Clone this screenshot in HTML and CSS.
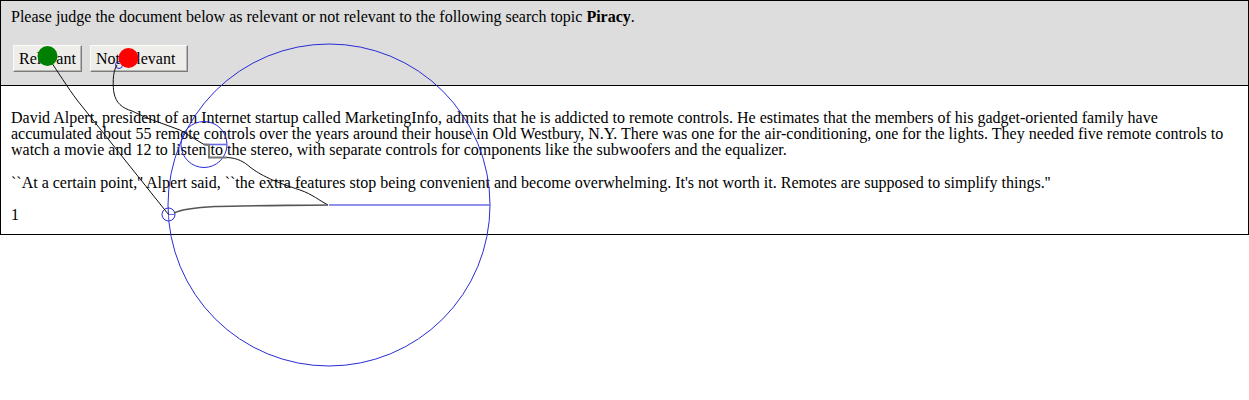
FILE: index.html
```html
<!DOCTYPE html>
<html>
<head>
<meta charset="utf-8">
<title>Relevance judgement</title>
<link rel="stylesheet" href="styles.css">
</head>
<body>
<div class="page">
  <div class="task">
    <p class="prompt">Please judge the document below as relevant or not relevant to the following search topic <b>Piracy</b>.</p>
    <div class="actions">
      <button class="btn">Relevant</button>
      <button class="btn btn-wide">Not relevant</button>
    </div>
  </div>
  <div class="doc">
    <p class="para">David Alpert, president of an Internet startup called MarketingInfo, admits that he is addicted to remote controls. He estimates that the members of his gadget-oriented family have accumulated about 55 remote controls over the years around their house in Old Westbury, N.Y. There was one for the air-conditioning, one for the lights. They needed five remote controls to watch a movie and 12 to listen to the stereo, with separate controls for components like the subwoofers and the equalizer.</p>
    <p class="para para-2">``At a certain point,'' Alpert said, ``the extra features stop being convenient and become overwhelming. It's not worth it. Remotes are supposed to simplify things.''</p>
    <div class="pagenum">1</div>
  </div>

  <svg class="trace" width="1249" height="400" viewBox="0 0 1249 400" xmlns="http://www.w3.org/2000/svg">
    <!-- large circle and radius -->
    <circle cx="329" cy="205" r="161" fill="none" stroke="#2b2bd6" stroke-width="1"/>
    <line x1="329" y1="205" x2="490" y2="205" stroke="#6a6ae6" stroke-width="1.6"/>
    <!-- small circle and radius -->
    <circle cx="204" cy="144.5" r="23" fill="none" stroke="#2b2bd6" stroke-width="1"/>
    <line x1="204" y1="144.5" x2="227" y2="144.5" stroke="#6a6ae6" stroke-width="1.6"/>
    <!-- tiny circle -->
    <circle cx="168.5" cy="214.5" r="6.5" fill="none" stroke="#2b2bd6" stroke-width="1"/>
    <line x1="168.5" y1="214.5" x2="175" y2="214.5" stroke="#6a6ae6" stroke-width="1"/>
    <line x1="168.5" y1="214.5" x2="168.5" y2="221" stroke="#6a6ae6" stroke-width="1"/>
    <!-- tiny circle near red -->
    <circle cx="119" cy="65" r="3.5" fill="none" stroke="#2b2bd6" stroke-width="1"/>

    <!-- path from green -->
    <path d="M47.5,56.5 C58,72 68,88 77,100 L168.5,214.5" fill="none" stroke="#111" stroke-width="1"/>
    <!-- path from red -->
    <path d="M117,65 C112,72 113,88 114,93 C116,103 122,108 132,111 L147,118 L180,130 L204,144.5" fill="none" stroke="#111" stroke-width="1"/>
    <path d="M204,144.5 L209,145 L209,157.5 L227,157.5" fill="none" stroke="#777" stroke-width="2"/>
    <path d="M227,157.5 C238,158 244,162 250,167 C260,175 275,182 300,190 C312,194 320,201 328,205" fill="none" stroke="#111" stroke-width="1"/>
    <path d="M328,205 C290,205.5 240,205.5 215,206.5 C195,207.5 180,210 174,213" fill="none" stroke="#555" stroke-width="1.6"/>

    <!-- dots -->
    <circle cx="47.5" cy="56" r="10" fill="#008000"/>
    <circle cx="128.5" cy="58" r="10" fill="#ff0000"/>
  </svg>
</div>
</body>
</html>
```

FILE: styles.css
```css
html, body {
  margin: 0;
  padding: 0;
  background: #fff;
}

body {
  font-family: "Liberation Serif", "Times New Roman", serif;
  font-size: 16px;
  color: #000;
}

.page {
  position: relative;
  width: 1249px;
  min-height: 400px;
}

.task {
  background: #dddddd;
  border: 1px solid #000;
  padding: 7px 10px 13px;
}

.prompt {
  margin: 0;
  line-height: 18px;
}

.actions {
  display: flex;
  gap: 8px;
  margin: 19px 0 0 2px;
}

.btn {
  font-family: "Liberation Serif", "Times New Roman", serif;
  font-size: 16px;
  line-height: 18px;
  color: #000;
  background: #efedea;
  padding: 4px 5px 3px;
  border: 1px solid;
  border-color: #fbfbfb #7b7b7b #7b7b7b #fbfbfb;
  box-shadow: inset -1px -1px 0 #b9b7b4;
  border-radius: 0;
  margin: 0;
}

.btn-wide {
  padding-left: 5px;
  padding-right: 12px;
}

.doc {
  border: 1px solid #000;
  border-top: none;
  padding: 24px 10px 11px;
}

.para {
  margin: 0;
  line-height: 16px;
}

.para-2 {
  margin-top: 17px;
}

.pagenum {
  margin-top: 16px;
  line-height: 16px;
}

.trace {
  position: absolute;
  top: 0;
  left: 0;
  pointer-events: none;
}
```
